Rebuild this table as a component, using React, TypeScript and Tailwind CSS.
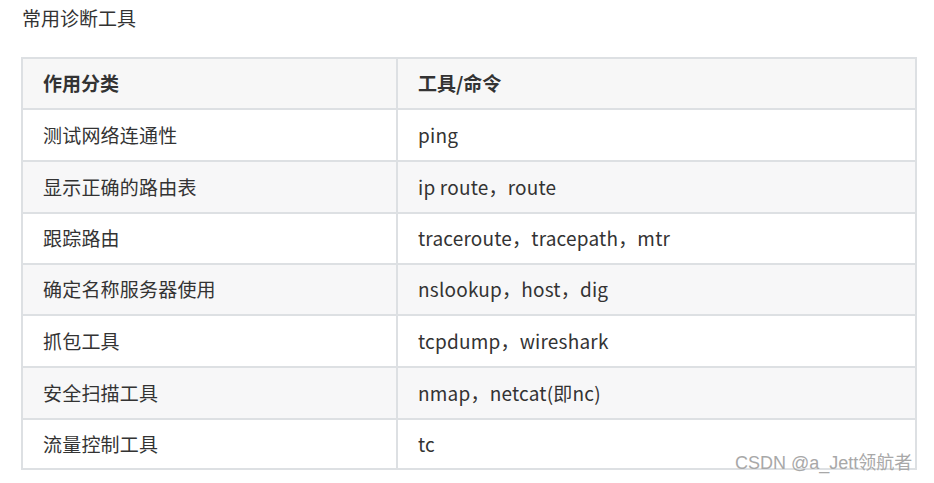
import React from "react";

const rows: [string, string, string][] = [
  ["测试网络连通性", "ping", "h-[52px]"],
  ["显示正确的路由表", "ip route，route", "h-[52px]"],
  ["跟踪路由", "traceroute，tracepath，mtr", "h-[51px]"],
  ["确定名称服务器使用", "nslookup，host，dig", "h-[51px]"],
  ["抓包工具", "tcpdump，wireshark", "h-[52px]"],
  ["安全扫描工具", "nmap，netcat(即nc)", "h-[52px]"],
  ["流量控制工具", "tc", "h-[50px]"],
];

export default function App() {
  return (
    <div
      className="relative h-[483px] w-[934px] bg-white text-[#333]"
      style={{ fontFamily: '"Noto Sans CJK SC", "Noto Sans", sans-serif' }}
    >
      <div className="pl-[22px] pt-[5px] text-[19px] leading-[26px]">常用诊断工具</div>
      <div className="ml-[21px] mt-[26px] w-[896px] border-2 border-[#dde0e3]">
        <div className="flex h-[49px] bg-[#f7f7f7] text-[19px] font-bold">
          <div className="flex w-[375px] items-center border-r-2 border-[#dde0e3] pl-[20px]">作用分类</div>
          <div className="flex flex-1 items-center pl-[20px]">工具/命令</div>
        </div>
        {rows.map(([a, b, h], i) => (
          <div
            key={a}
            className={`flex border-t-2 border-[#dde0e3] text-[19px] tracking-[0.2px] ${h} ${
              i % 2 === 1 ? "bg-[#f7f7f8]" : "bg-white"
            }`}
          >
            <div className="flex w-[375px] items-center border-r-2 border-[#dde0e3] pl-[20px]">{a}</div>
            <div className="flex flex-1 items-center pl-[20px]">{b}</div>
          </div>
        ))}
      </div>
      <div
        className="absolute left-[735px] top-[452px] text-[18px] leading-[22px] text-[#a8a8a8]"
        style={{ fontFamily: '"Liberation Sans", "Noto Sans CJK SC", sans-serif' }}
      >
        CSDN @a_Jett领航者
      </div>
    </div>
  );
}
